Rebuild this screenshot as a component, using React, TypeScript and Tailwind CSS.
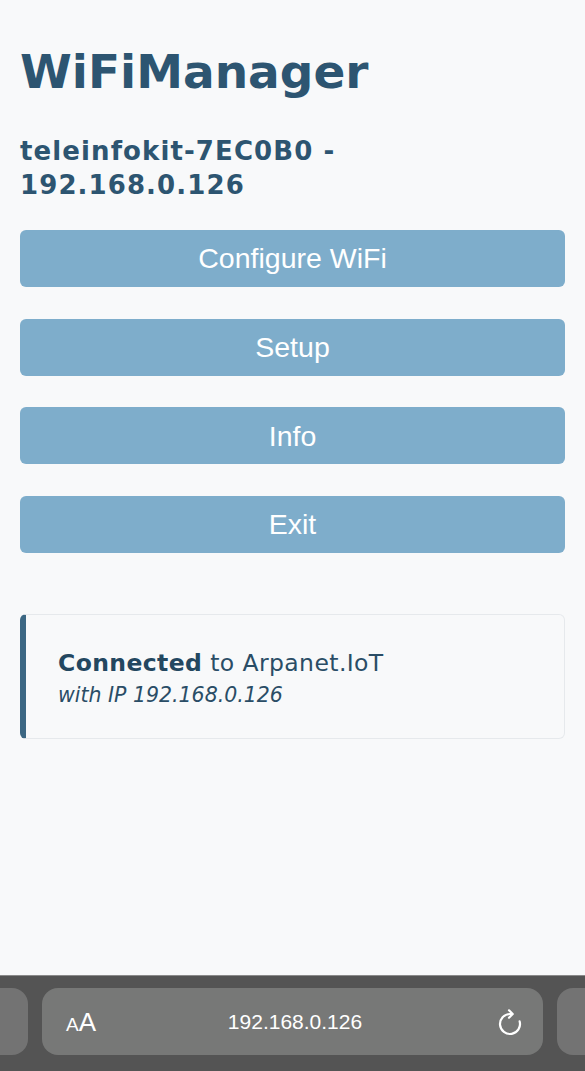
const buttons = ["Configure WiFi", "Setup", "Info", "Exit"];

function ReloadIcon() {
  return (
    <svg width="28" height="28" viewBox="0 0 28 28" fill="none" stroke="currentColor" strokeWidth="2.2" strokeLinecap="round" strokeLinejoin="round">
      <path d="M23.66 13.41A10 10 0 1 1 14 6H16.2" />
      <path d="M13 2.3L16.7 6L13 9.7" />
    </svg>
  );
}

export default function App() {
  return (
    <div className="flex h-[1071px] flex-col bg-[#f8f9fa]">
      <main className="flex-1 px-[20px] pt-[44px] font-['DejaVu_Sans',sans-serif] text-[#2d5571]">
        <h1 className="text-[47px] font-bold leading-[56px]">WiFiManager</h1>
        <h3 className="mt-[34px] text-[26px] font-bold leading-[34px] tracking-[1.1px]">
          teleinfokit-7EC0B0 -<br />
          192.168.0.126
        </h3>

        <div className="mt-[28px] flex flex-col gap-[31.7px]">
          {buttons.map((label) => (
            <button
              key={label}
              className="h-[57px] w-full rounded-[6px] bg-[#7eadcb] font-['Liberation_Sans',sans-serif] text-[28.5px] text-white"
            >
              {label}
            </button>
          ))}
        </div>

        <div className="mt-[61px] rounded-[6px] border border-l-[6px] border-[#e6e9ec] border-l-[#3c6783] pl-[32px] pt-[33px] pb-[26px] text-[#2a4d66]">
          <div className="text-[23.5px] leading-[30px] tracking-[0.4px]">
            <strong className="font-bold text-[#234760]">Connected</strong> to Arpanet.IoT
          </div>
          <div className="text-[20.5px] italic leading-[34px]">with IP 192.168.0.126</div>
        </div>
      </main>

      <footer className="flex h-[96px] items-start gap-[14px] border-t border-[#8a8a8a] bg-[#545454] pt-[12px]">
        <div className="h-[67px] w-[28px] shrink-0 rounded-r-[16px] bg-[#737373]" />
        <div className="grid h-[67px] w-[501px] shrink-0 grid-cols-[1fr_auto_1fr] items-center rounded-[16px] bg-[#777877] pl-[24px] pr-[19px] font-['Liberation_Sans',sans-serif] text-white">
          <span className="text-[26px] leading-none">
            <span className="text-[19px]">A</span>A
          </span>
          <span className="text-[21px]">192.168.0.126</span>
          <span className="flex justify-end">
            <ReloadIcon />
          </span>
        </div>
        <div className="h-[67px] flex-1 rounded-l-[16px] bg-[#737373]" />
      </footer>
    </div>
  );
}
